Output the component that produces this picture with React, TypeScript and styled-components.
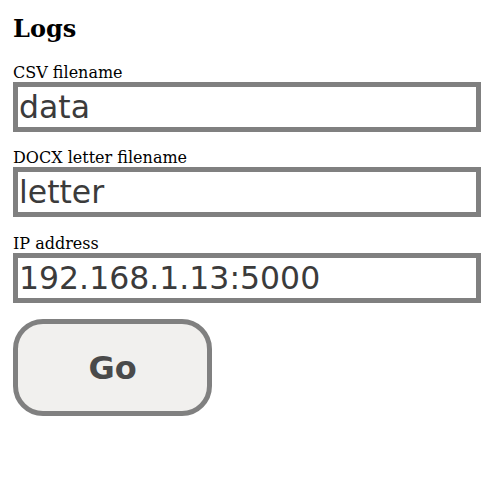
import styled, { createGlobalStyle } from "styled-components";

const GlobalStyle = createGlobalStyle`
    body {
        margin: 8px;
        background: #ffffff;
        font-family: "DejaVu Serif", serif;
        color: #000000;
    }
`;

const Container = styled.div`
    width: 468px;
    padding: 0 5px;
    display: flex;
    flex-direction: column;
`;

const Title = styled.h2`
    font-size: 24px;
    font-weight: bold;
    margin: 6px 0 20px;
`;

const Field = styled.label`
    display: flex;
    flex-direction: column;
    margin-bottom: 16.4px;
    font-size: 16px;
`;

const Input = styled.input`
    box-sizing: border-box;
    width: 100%;
    height: 50px;
    margin: 0;
    border: 5px solid #808080;
    padding: 1px 1px;
    font-family: "DejaVu Sans", sans-serif;
    font-size: 31.5px;
    color: #3b3b3b;
    background: #ffffff;
    outline: none;
`;

const Button = styled.button`
    box-sizing: border-box;
    width: 199px;
    height: 97px;
    margin: 0;
    border: 5px solid #808080;
    border-radius: 30px;
    background: #f1f0ee;
    font-family: "DejaVu Sans", sans-serif;
    font-size: 32px;
    font-weight: bold;
    color: #4a4a4a;
    cursor: pointer;
`;

const fields = [
    { label: "CSV filename", value: "data" },
    { label: "DOCX letter filename", value: "letter" },
    { label: "IP address", value: "192.168.1.13:5000" },
];

function App() {
    return <>
        <GlobalStyle />
        <Container>
            <Title>Logs</Title>
            {fields.map(f => (
                <Field key={f.label}>
                    {f.label}
                    <Input defaultValue={f.value} />
                </Field>
            ))}
            <div>
                <Button>Go</Button>
            </div>
        </Container>
    </>
}

export default App;
